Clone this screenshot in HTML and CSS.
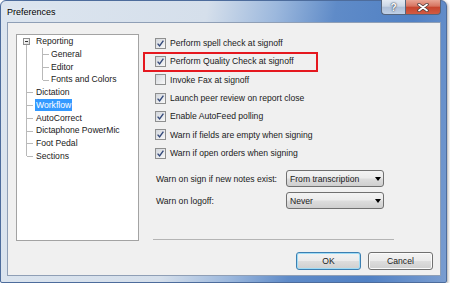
FILE: index.html
```html
<!DOCTYPE html>
<html lang="en">
<head>
    <meta charset="UTF-8">
    <title>Preferences</title>
    <link rel="stylesheet" href="styles.css">
</head>
<body>
    <div class="window">
        <div class="titlebar">
            <span class="title">Preferences</span>
            <div class="caption-buttons">
                <span class="cap help">?</span>
                <span class="cap close">
                    <svg width="12" height="9" viewBox="0 0 12 9">
                        <path d="M2 1.5 L10 7.5 M10 1.5 L2 7.5" stroke="#4a3a3a" stroke-width="3.4" stroke-linecap="round"/>
                        <path d="M2 1.5 L10 7.5 M10 1.5 L2 7.5" stroke="#fff" stroke-width="1.8" stroke-linecap="round"/>
                    </svg>
                </span>
            </div>
        </div>

        <div class="client">
            <div class="main">
                <div class="tree">
                    <div class="node root first"><span class="expander"></span>Reporting</div>
                    <div class="node child"><span class="branch"></span>General</div>
                    <div class="node child"><span class="branch"></span>Editor</div>
                    <div class="node child last-child"><span class="branch"></span>Fonts and Colors</div>
                    <div class="node root">Dictation</div>
                    <div class="node root"><span class="selected">Workflow</span></div>
                    <div class="node root">AutoCorrect</div>
                    <div class="node root">Dictaphone PowerMic</div>
                    <div class="node root">Foot Pedal</div>
                    <div class="node root last">Sections</div>
                </div>

                <div class="pane">
                    <div class="check-row">
                        <span class="box"><svg width="9" height="9" viewBox="0 0 9 9"><path d="M1.6 4.6 L3.6 6.9 L7.4 1.6" stroke="#34497a" stroke-width="1.4" fill="none"/></svg></span>
                        Perform spell check at signoff
                    </div>
                    <div class="check-row marked">
                        <span class="box"><svg width="9" height="9" viewBox="0 0 9 9"><path d="M1.6 4.6 L3.6 6.9 L7.4 1.6" stroke="#34497a" stroke-width="1.4" fill="none"/></svg></span>
                        Perform Quality Check at signoff
                    </div>
                    <div class="check-row">
                        <span class="box"></span>
                        Invoke Fax at signoff
                    </div>
                    <div class="check-row">
                        <span class="box"><svg width="9" height="9" viewBox="0 0 9 9"><path d="M1.6 4.6 L3.6 6.9 L7.4 1.6" stroke="#34497a" stroke-width="1.4" fill="none"/></svg></span>
                        Launch peer review on report close
                    </div>
                    <div class="check-row">
                        <span class="box"><svg width="9" height="9" viewBox="0 0 9 9"><path d="M1.6 4.6 L3.6 6.9 L7.4 1.6" stroke="#34497a" stroke-width="1.4" fill="none"/></svg></span>
                        Enable AutoFeed polling
                    </div>
                    <div class="check-row">
                        <span class="box"><svg width="9" height="9" viewBox="0 0 9 9"><path d="M1.6 4.6 L3.6 6.9 L7.4 1.6" stroke="#34497a" stroke-width="1.4" fill="none"/></svg></span>
                        Warn if fields are empty when signing
                    </div>
                    <div class="check-row">
                        <span class="box"><svg width="9" height="9" viewBox="0 0 9 9"><path d="M1.6 4.6 L3.6 6.9 L7.4 1.6" stroke="#34497a" stroke-width="1.4" fill="none"/></svg></span>
                        Warn if open orders when signing
                    </div>

                    <div class="fields">
                        <span class="field-label">Warn on sign if new notes exist:</span>
                        <div class="combo">From transcription<span class="arrow"></span></div>
                        <span class="field-label">Warn on logoff:</span>
                        <div class="combo">Never<span class="arrow"></span></div>
                    </div>

                    <div class="separator"></div>
                </div>
            </div>

            <div class="footer">
                <button class="btn default">OK</button>
                <button class="btn">Cancel</button>
            </div>
        </div>
    </div>
</body>
</html>
```

FILE: styles.css
```css
/* Preferences dialog, Windows 7 look */
body {
    margin: 0;
    background-color: #fff;
    font-family: "Liberation Sans", Arial, sans-serif;
    font-size: 8.6px;
    color: #1a1a1a;
}

.window {
    width: 447px;
    height: 283px;
    box-sizing: border-box;
    border: 1px solid #4d6c9c;
    border-radius: 6px 6px 2px 2px;
    padding: 0 5px 6px 6px;
    display: flex;
    flex-direction: column;
    background: linear-gradient(100deg, #dce5ef 0%, #d5dfeb 42%, #9cb8dd 56%, #5f8bc8 68%, #5181c4 84%, #7a9dd0 100%);
    box-shadow: 1px 1px 3px rgba(0, 0, 0, 0.35);
}

.titlebar {
    height: 21px;
    display: flex;
}

.title {
    align-self: center;
    font-size: 9px;
    color: #000;
    text-shadow: 0 0 4px rgba(255, 255, 255, 0.9);
}

.caption-buttons {
    margin-left: auto;
    margin-top: -1px;
    display: flex;
    align-self: flex-start;
}

.cap {
    height: 15px;
    box-sizing: border-box;
    border: 1px solid #55657d;
    border-top: none;
    display: flex;
    align-items: center;
    justify-content: center;
}

.help {
    width: 24px;
    border-right: none;
    border-radius: 0 0 0 4px;
    background: linear-gradient(#e3eaf3 0%, #cbd7e6 45%, #aebfd7 50%, #bfd0e7 100%);
    color: #fff;
    font-weight: bold;
    font-size: 10px;
    text-shadow: 0 0 2px #2e3b4e, 0 0 1px #2e3b4e;
}

.close {
    width: 36px;
    border-radius: 0 0 4px 0;
    background: linear-gradient(#e9a595 0%, #d6735f 45%, #c7442d 50%, #d15b43 100%);
}

.client {
    flex: 1;
    background-color: #f0f0f0;
    border: 1px solid #8f9fb6;
}

.main {
    display: flex;
    padding: 11px 0 0 8px;
}

/* tree view */
.tree {
    width: 123px;
    height: 207px;
    box-sizing: border-box;
    border: 1px solid #a3a3a3;
    background-color: #fff;
}

.node {
    position: relative;
    height: 12.75px;
    line-height: 12.75px;
    padding-left: 19px;
    white-space: nowrap;
}

.node::before {
    content: '';
    position: absolute;
    left: 9px;
    top: 0;
    bottom: 0;
    border-left: 1px solid #b9b9b9;
}

.node.first::before {
    top: 10px;
}

.node.last::before {
    bottom: 50%;
}

.root::after {
    content: '';
    position: absolute;
    left: 10px;
    width: 6px;
    top: 50%;
    border-top: 1px solid #b9b9b9;
}

.node.first::after {
    display: none;
}

.expander {
    position: absolute;
    left: 6px;
    top: 3px;
    width: 7px;
    height: 7px;
    box-sizing: border-box;
    border: 1px solid #8e8e8e;
    background: linear-gradient(135deg, #fff, #dcdcdc);
}

.expander::after {
    content: '';
    position: absolute;
    left: 1px;
    top: 2px;
    width: 3px;
    border-top: 1px solid #333;
}

.child {
    padding-left: 34px;
}

.child::after {
    content: '';
    position: absolute;
    left: 25px;
    top: 0;
    bottom: 0;
    border-left: 1px solid #b9b9b9;
}

.child.last-child::after {
    bottom: 50%;
}

.branch {
    position: absolute;
    left: 26px;
    width: 6px;
    top: 50%;
    border-top: 1px solid #b9b9b9;
}

.selected {
    display: inline-block;
    height: 12px;
    line-height: 12px;
    margin-left: -1px;
    padding: 0 1px;
    background-color: #3399ff;
    color: #fff;
}

/* right pane */
.pane {
    width: 240px;
    margin-left: 16px;
    display: flex;
    flex-direction: column;
}

.check-row {
    position: relative;
    height: 18.33px;
    display: flex;
    align-items: center;
    gap: 4px;
    white-space: nowrap;
}

.box {
    width: 11px;
    height: 11px;
    box-sizing: border-box;
    border: 1px solid #8e8f8f;
    background: linear-gradient(135deg, #d2d6dc, #f8f8f8);
    display: flex;
    align-items: center;
    justify-content: center;
}

.marked::after {
    content: '';
    position: absolute;
    left: -12px;
    top: 0;
    width: 175px;
    height: 20px;
    box-sizing: border-box;
    border: 2px solid #e5181f;
}

.fields {
    display: grid;
    grid-template-columns: 130px 98px;
    grid-auto-rows: 17px;
    row-gap: 5px;
    margin-top: 8px;
    margin-left: 1px;
    align-items: center;
}

.combo {
    height: 17px;
    box-sizing: border-box;
    border: 1px solid #707070;
    border-radius: 3px;
    padding: 0 2px 0 3px;
    display: flex;
    align-items: center;
    background: linear-gradient(#f3f3f3 0%, #ebebeb 48%, #dddddd 52%, #cfcfcf 100%);
}

.arrow {
    margin-left: auto;
    width: 0;
    height: 0;
    border-left: 3.5px solid transparent;
    border-right: 3.5px solid transparent;
    border-top: 4px solid #000;
}

.separator {
    margin: auto 0 1px -2px;
    width: 241px;
    height: 1px;
    background-color: #b4b4b4;
}

/* buttons */
.footer {
    display: flex;
    justify-content: flex-end;
    gap: 7px;
    margin-top: 11px;
    padding-right: 7px;
}

.btn {
    width: 65px;
    height: 18px;
    padding: 0;
    border: 1px solid #707070;
    border-radius: 3px;
    font-family: inherit;
    font-size: 8.6px;
    color: #1a1a1a;
    background: linear-gradient(#f3f3f3 0%, #ebebeb 48%, #dddddd 52%, #cfcfcf 100%);
    box-shadow: inset 0 0 0 1px #fbfbfb;
}

.btn.default {
    border-color: #3c7fb1;
    box-shadow: inset 0 0 0 1px #9fdcf6;
}
```
